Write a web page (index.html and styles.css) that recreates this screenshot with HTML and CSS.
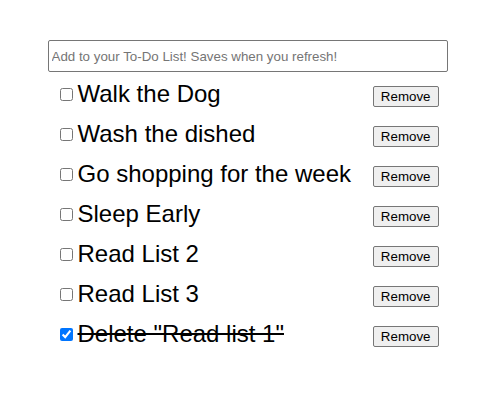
FILE: index.html
```html
<!DOCTYPE html>
<html>
<head>
<meta charset="utf-8">
<link rel="stylesheet" href="styles.css">
</head>
<body>
<div class="app">
  <input class="new-item" type="text" placeholder="Add to your To-Do List! Saves when you refresh!">
  <ul class="list">
    <li class="item"><label class="label"><input type="checkbox" class="check"><span class="text">Walk the Dog</span></label><button class="remove">Remove</button></li>
    <li class="item"><label class="label"><input type="checkbox" class="check"><span class="text">Wash the dished</span></label><button class="remove">Remove</button></li>
    <li class="item"><label class="label"><input type="checkbox" class="check"><span class="text">Go shopping for the week</span></label><button class="remove">Remove</button></li>
    <li class="item"><label class="label"><input type="checkbox" class="check"><span class="text">Sleep Early</span></label><button class="remove">Remove</button></li>
    <li class="item"><label class="label"><input type="checkbox" class="check"><span class="text">Read List 2</span></label><button class="remove">Remove</button></li>
    <li class="item"><label class="label"><input type="checkbox" class="check"><span class="text">Read List 3</span></label><button class="remove">Remove</button></li>
    <li class="item done"><label class="label"><input type="checkbox" class="check" checked><span class="text">Delete "Read list 1"</span></label><button class="remove">Remove</button></li>
  </ul>
</div>
</body>
</html>
```
FILE: styles.css
```css
html, body {
  margin: 0;
  padding: 0;
  background: #ffffff;
}
body {
  font-family: "Liberation Sans", Arial, sans-serif;
  color: #000;
}
.app {
  width: 400px;
  margin: 40px auto 0;
}
.new-item {
  display: block;
  box-sizing: border-box;
  width: 400px;
  height: 32px;
  margin: 0;
  padding: 1px 3px;
  border: 1px solid #767676;
  border-radius: 2px;
  font-family: "Liberation Sans", Arial, sans-serif;
  font-size: 13.33px;
  color: #000;
}
.new-item::placeholder {
  color: #757575;
}
.list {
  list-style: none;
  margin: 2px 0 0;
  padding: 0 9px 0 9px;
}
.item {
  display: flex;
  align-items: center;
  justify-content: space-between;
  height: 40px;
}
.label {
  display: flex;
  align-items: center;
}
.check {
  width: 13px;
  height: 13px;
  margin: 0 5px 0 3px;
  accent-color: #0075ff;
}
.text {
  font-size: 24px;
  line-height: 28px;
}
.done .text {
  text-decoration: line-through;
}
.remove {
  font-family: "Liberation Sans", Arial, sans-serif;
  font-size: 13.33px;
  height: 21px;
  padding: 1px 7px;
  margin-top: 4px;
  border: 1px solid #767676;
  border-radius: 2px;
  background: #efefef;
  color: #000;
}
```
